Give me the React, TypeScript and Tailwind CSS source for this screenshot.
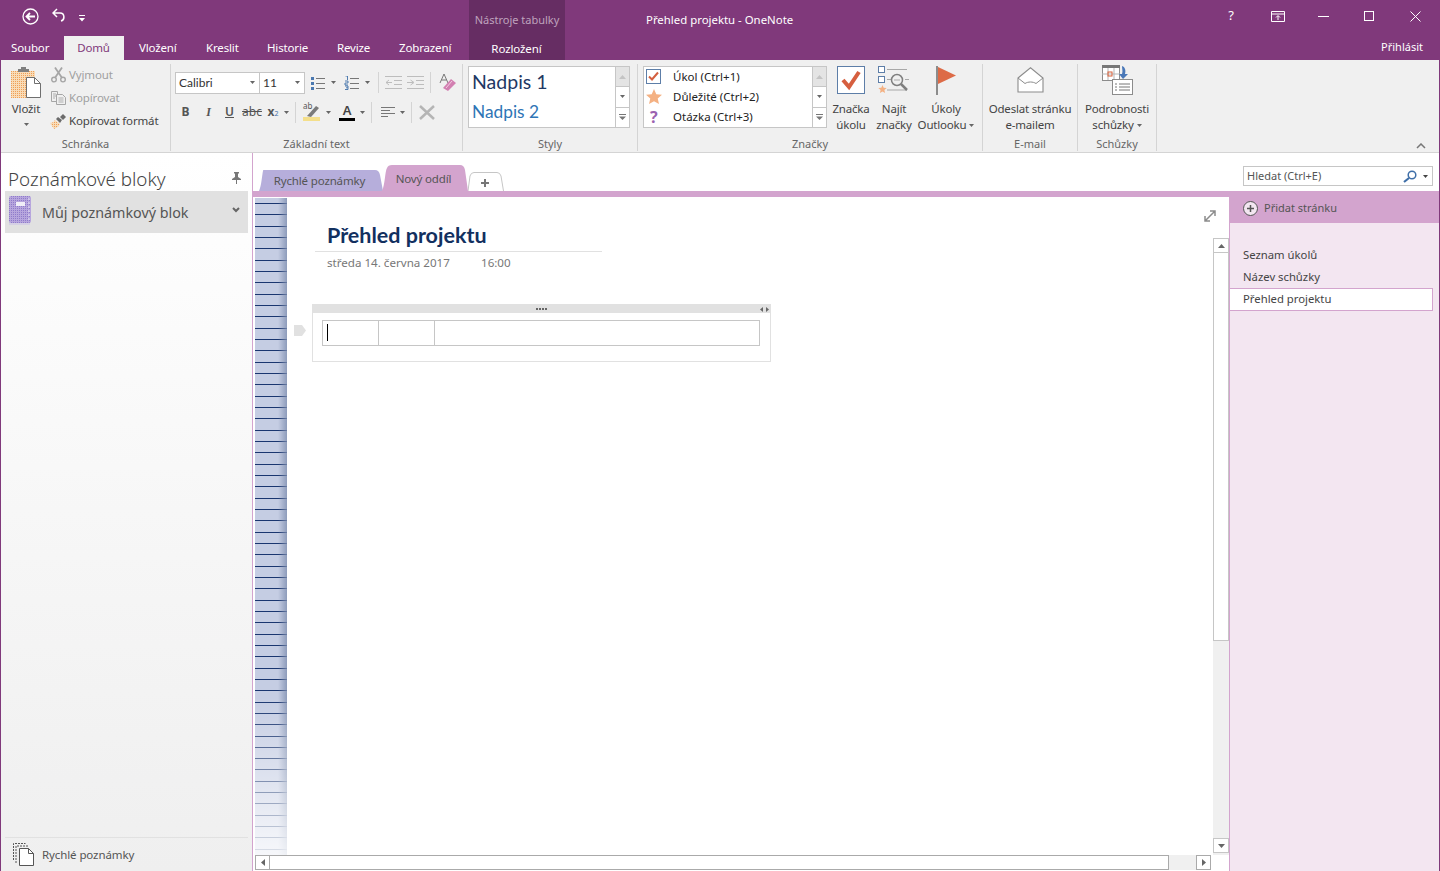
import type { ReactNode } from 'react';

const Caret = ({ color = '#666' }: { color?: string }) => (
  <svg width="5" height="3" viewBox="0 0 5 3" className="shrink-0">
    <path d="M0 0h5L2.5 3z" fill={color} />
  </svg>
);

const Dots = () => (
  <defs>
    <pattern id="dither" width="2" height="2" patternUnits="userSpaceOnUse">
      <rect width="2" height="2" fill="#f8dcb8" />
      <rect width="1" height="1" fill="#ef9f57" />
    </pattern>
  </defs>
);

const PasteIcon = () => (
  <svg width="31" height="32" viewBox="0 0 31 32">
    <Dots />
    <rect x="0" y="4" width="24" height="27" fill="url(#dither)" />
    <path d="M7 4V2h3V0h5v2h3v3H7z" fill="#7f7f7f" />
    <path d="M15.5 10.5h8l6 6v14h-14z" fill="#fff" stroke="#6f6f6f" />
    <path d="M23.5 10.5v6h6" fill="none" stroke="#6f6f6f" />
  </svg>
);

const ScissorsIcon = () => (
  <svg width="15" height="16" viewBox="0 0 15 16" fill="none" stroke="#a6a6a6" strokeWidth="1.4">
    <circle cx="3" cy="12.6" r="2.3" />
    <circle cx="12" cy="12.6" r="2.3" />
    <path d="M4.2 10.6 11 .6M10.8 10.6 4 .6" strokeWidth="1.8" />
  </svg>
);

const CopyIcon = () => (
  <svg width="15" height="14" viewBox="0 0 15 14" fill="#f0f0f0" stroke="#a6a6a6">
    <path d="M.5.5h6v10h-6z" />
    <path d="M5.5 3.5h6l3 3v7h-9z" />
    <path d="M2 3h3M2 5h3M2 7h2M7.5 7h5M7.5 9h5M7.5 11h5" strokeWidth=".9" />
  </svg>
);

const BrushIcon = () => (
  <svg width="17" height="15" viewBox="0 0 17 15">
    <Dots />
    <path d="M0 9c2 0 4-1 5-3l5 4c-1 2-3 4-6 5z" fill="url(#dither)" />
    <path d="m6 5 2-2 4 3-2 3z" fill="#6b6b6b" />
    <path d="m10 3 3-3 3 3-3 3z" fill="#6b6b6b" />
  </svg>
);

const BulletsIcon = () => (
  <svg width="15" height="14" viewBox="0 0 15 14">
    <path d="M1 1h3v3H1zM1 6h3v3H1zM1 11h3v3H1z" fill="#4a78b0" />
    <path d="M6 2.5h9M6 7.5h9M6 12.5h9" stroke="#777" />
  </svg>
);

const NumberingIcon = () => (
  <svg width="15" height="14" viewBox="0 0 15 14">
    <path d="M1.5 0h2v4M1 5h3v2H1v2h3M1 10h3v3.500H1M2 11.800h2" stroke="#3f6fa8" fill="none" strokeWidth=".9" />
    <path d="M6 2.500h9M6 7.500h9M6 12.500h9" stroke="#777" />
  </svg>
);

const IndentIcon = ({ flip = false }: { flip?: boolean }) => (
  <svg width="17" height="13" viewBox="0 0 17 13" stroke="#bdbdbd" fill="none">
    <path d="M0 .5h17M9 4.500h8M9 8.500h8M0 12.500h17" />
    {flip ? <path d="M7 6.500H1m3-2.500-3 2.500L4 9" /> : <path d="M0 6.500h6M3.500 4 7 6.500 3.500 9" />}
  </svg>
);

const EraserIcon = () => (
  <svg width="17" height="19" viewBox="0 0 17 19">
    <path d="M5 1 1 10M5 1l4 9M2.500 7h5" stroke="#777" fill="none" />
    <path d="m4 15 8-9 5 4-8 8z" fill="#d27fb1" />
    <path d="m7 15 6-7" stroke="#f3cbe1" />
  </svg>
);

const HighlightIcon = () => (
  <div className="relative h-[18px] w-[17px]">
    <span className="absolute -top-[2px] left-0 text-[8px] leading-[10px] text-[#555]">ab</span>
    <svg width="17" height="18" viewBox="0 0 17 18" className="absolute inset-0">
      <rect y="14" width="17" height="4" fill="#f4df8b" />
      <path d="M4 13 13 3l3 2-8 9z" fill="#7a7a7a" />
    </svg>
  </div>
);

const TaskBox = () => (
  <svg width="16" height="16" viewBox="0 0 16 16">
    <rect x=".5" y=".5" width="14" height="14" fill="#fff" stroke="#5d7ea8" />
    <path d="m3 7.500 3 3 6-7" stroke="#d45f3f" strokeWidth="2" fill="none" />
  </svg>
);

const StarIcon = ({ size = 16 }: { size?: number }) => (
  <svg width={size} height={size} viewBox="0 0 16 16">
    <path d="m8 0 2.300 5.200 5.700.6-4.300 3.700 1.300 5.500L8 12.200 3 15l1.300-5.500L0 5.800l5.700-.6z" fill="#f4b183" />
  </svg>
);

const TaskTagIcon = () => (
  <svg width="28" height="28" viewBox="0 0 28 28">
    <rect x=".5" y=".5" width="27" height="27" fill="#fff" stroke="#5d7ea8" />
    <path d="m6 14 6 7L22 6" stroke="#d65f3f" strokeWidth="4" fill="none" />
  </svg>
);

const FindTagsIcon = () => (
  <svg width="32" height="28" viewBox="0 0 32 28" fill="none">
    <rect x=".5" y=".5" width="6" height="6" fill="#fff" stroke="#5d7ea8" />
    <rect x=".5" y="10.500" width="6" height="6" fill="#fff" stroke="#5d7ea8" />
    <path d="M9 3.500h20M9 13.500h4M27 13.500h4M9 24h20" stroke="#a8a8a8" />
    <circle cx="19" cy="14" r="5.500" stroke="#7f7f7f" strokeWidth="1.500" />
    <path d="M16 14h6" stroke="#aaa" />
    <path d="m23 18 6 6" stroke="#7f7f7f" strokeWidth="2.500" />
    <path d="m4.500 19 1.200 2.800 3 .3-2.300 2 .7 3-2.600-1.500-2.600 1.500.7-3-2.300-2 3-.3z" fill="#f4b183" />
  </svg>
);

const FlagIcon = () => (
  <svg width="21" height="29" viewBox="0 0 21 29">
    <path d="M0 0h2v29H0z" fill="#8c8c8c" />
    <path d="M2 1 20 9.500 2 18z" fill="#dd6b47" />
  </svg>
);

const EnvelopeIcon = () => (
  <svg width="27" height="26" viewBox="0 0 27 26" fill="none" stroke="#8c8c8c">
    <path d="M1 11 13.500 .8 26 11v14H1z" fill="#fff" strokeWidth="1.100" />
    <path d="m1 11 7 5.500c3-2 8-2 11 0L26 11" />
  </svg>
);

const MeetingIcon = () => (
  <svg width="31" height="30" viewBox="0 0 31 30" fill="none">
    <rect x=".5" y=".5" width="17" height="15" fill="#fff" stroke="#8c8c8c" />
    <rect x="0" y="0" width="18" height="3" fill="#777" />
    <path d="M6 3v12M12 3v12M0 9h18" stroke="#b5b5b5" />
    <rect x="6" y="7" width="4" height="4" stroke="#d9603a" />
    <rect x="10.500" y="14.500" width="20" height="15" fill="#fff" stroke="#8c8c8c" />
    <path d="M13 19h2M17 19h11M13 22h2M17 22h11M13 25h2M17 25h11" stroke="#777" />
    <path d="M20 1c3 1 4 4 3 8h3l-5 5-4-5h3c1-3 0-5 0-8z" fill="#4a78b8" />
  </svg>
);

const TinyScrollBtn = ({ kind, grey = false }: { kind: 'up' | 'down' | 'more'; grey?: boolean }) => (
  <div className={`flex flex-1 items-center justify-center border-b border-[#c6c6c6] last:border-b-0 ${grey ? 'bg-[#e4e4e4]' : 'bg-white'}`}>
    {kind === 'up' && (
      <svg width="7" height="4" viewBox="0 0 7 4"><path d="M3.500 0 7 4H0z" fill="#c4c4c4" /></svg>
    )}
    {kind === 'down' && <Caret />}
    {kind === 'more' && (
      <svg width="7" height="6" viewBox="0 0 7 6"><path d="M0 0h7v1H0zM0 2.500h7L3.500 6z" fill="#777" /></svg>
    )}
  </div>
);

const Gallery = ({ width, children }: { width: string; children: ReactNode }) => (
  <div className={`flex h-[62px] border border-[#c6c6c6] bg-white ${width}`}>
    <div className="min-w-0 flex-1">{children}</div>
    <div className="flex w-[14px] flex-col border-l border-[#c6c6c6]">
      <TinyScrollBtn kind="up" grey />
      <TinyScrollBtn kind="down" />
      <TinyScrollBtn kind="more" />
    </div>
  </div>
);

const Group = ({ label, width, children }: { label: string; width: string; children: ReactNode }) => (
  <div className={`flex shrink-0 flex-col border-r border-[#d4d4d4] ${width}`}>
    <div className="flex h-[70px] min-h-0 flex-1">{children}</div>
    <div className="h-[14px] pb-[1px] text-center text-[11px] leading-[14px] text-[#666]">{label}</div>
  </div>
);

const BigButton = ({ width, icon, lines, caret = false }: { width: string; icon: ReactNode; lines: string[]; caret?: boolean }) => (
  <div className={`flex shrink-0 flex-col items-center ${width}`}>
    <div className="flex h-[32px] items-center justify-center">{icon}</div>
    <div className="mt-[5px] whitespace-nowrap text-center text-[11.500px] leading-[16px] tracking-[-0.2px] text-[#444]">
      <div>{lines[0]}</div>
      <div className="flex items-center justify-center gap-[3px]">
        {lines[1]}
        {caret && <Caret />}
      </div>
    </div>
  </div>
);

const Sep = () => <div className="mx-[6px] h-[21px] w-px shrink-0 bg-[#d4d4d4]" />;

const TextBtn = ({ className, children }: { className: string; children: ReactNode }) => (
  <span className={`flex h-[20px] shrink-0 items-center justify-center text-[12px] text-[#555] ${className}`}>{children}</span>
);

const Tab = ({ label, fill, width, height, top }: { label: string; fill: string; width: number; height: number; top: number }) => (
  <div className="relative flex shrink-0 justify-center pr-[3px]" style={{ width, height }}>
    <svg width={width} height={height} viewBox={`0 0 ${width} ${height}`} className="absolute inset-0">
      <path d={`M0 ${height}C3 ${height - 6} 3 ${height - 20} 5 ${height - 23}Q6 0 10 0H${width - 8}Q${width - 4} 0 ${width - 3} 5L${width} ${height}z`} fill={fill} />
    </svg>
    <span className="relative text-[11.500px] leading-[16px] tracking-[-0.15px] text-[#555]" style={{ paddingTop: top }}>{label}</span>
  </div>
);

export default function App() {
  return (
    <div className="flex h-[871px] w-[1440px] flex-col overflow-hidden border-x border-[#80397b] bg-white font-['Noto_Sans',sans-serif] text-[11.500px]">
      {/* Title bar and ribbon tabs */}
      <header className="flex h-[60px] shrink-0 bg-[#80397b] text-white">
        <div className="flex w-[468px] shrink-0 flex-col">
          <div className="flex h-[36px] items-center pl-[21px]">
            <svg width="17" height="17" viewBox="0 0 17 17" fill="none" stroke="#fff" className="mb-[4px]">
              <circle cx="8.500" cy="8.500" r="7.500" strokeWidth="1.300" />
              <path d="M13 8.500H5M8 5 4.500 8.500 8 12" strokeWidth="1.800" />
            </svg>
            <svg width="14" height="14" viewBox="0 0 14 14" fill="none" stroke="#fff" strokeWidth="1.500" className="ml-[13px] mb-[6px]">
              <path d="M5 1 1 5l4 4M1 5h7c5 0 5 7 1 8" />
            </svg>
            <svg width="6" height="7" viewBox="0 0 6 7" className="ml-[13px]">
              <path d="M0 0h6v1H0zM0 3h6L3 6.500z" fill="#fff" />
            </svg>
          </div>
          <nav className="flex h-[24px] items-end text-[11.500px] leading-[24px] tracking-[-0.15px]">
            <span className="ml-[10px] mt-[1px] w-[53px] leading-[25px]">Soubor</span>
            <span className="flex h-[24px] w-[60px] justify-center pr-[1px] bg-[#f0f0f0] text-[#80397b]">Domů</span>
            <span className="ml-[15px] w-[67px]">Vložení</span>
            <span className="w-[61px]">Kreslit</span>
            <span className="w-[70px]">Historie</span>
            <span className="w-[62px]">Revize</span>
            <span>Zobrazení</span>
          </nav>
        </div>
        <div className="flex w-[96px] shrink-0 flex-col items-center bg-[#662d63]">
          <span className="flex h-[36px] items-center pt-[4px] text-[11px] text-[#bfa3bd]">Nástroje tabulky</span>
          <span className="flex h-[24px] items-center pr-[1px] pt-[1px] text-[11.500px] tracking-[-0.1px]">Rozložení</span>
        </div>
        <div className="flex flex-1 flex-col">
          <div className="flex h-[36px] items-center">
            <span className="ml-[81px] pt-[3px] text-[11.400px]">Přehled projektu - OneNote</span>
            <div className="ml-auto flex items-center pb-[4px] pr-[18px]">
              <span className="text-[13px]">?</span>
              <svg width="14" height="11" viewBox="0 0 14 11" fill="none" stroke="#fff" className="ml-[37px]">
                <path d="M.5.500h13v10H.500zM.500 3h13M7 9V5M5 6.500l2-2 2 2" />
              </svg>
              <div className="ml-[33px] h-px w-[11px] bg-white" />
              <div className="ml-[35px] h-[10px] w-[10px] border border-white" />
              <svg width="11" height="11" viewBox="0 0 11 11" stroke="#fff" className="ml-[36px]">
                <path d="m.500.500 10 10m0-10-10 10" />
              </svg>
            </div>
          </div>
          <div className="h-[24px] pr-[16px] text-right text-[11px] leading-[22px]">Přihlásit</div>
        </div>
      </header>

      {/* Ribbon */}
      <section className="relative flex h-[93px] shrink-0 border-b border-[#d4d4d4] bg-[#f0f0f0] pb-[1px] pt-[4px]">
        <Group label="Schránka" width="w-[170px]">
          <div className="ml-[8px] flex w-[34px] flex-col items-center pt-[3px] tracking-[-0.15px] text-[#444]">
            <PasteIcon />
            <span className="mt-[2px] leading-[16px]">Vložit</span>
            <div className="mt-[6px]"><Caret /></div>
          </div>
          <div className="ml-[8px] flex flex-col gap-[7px] pt-[3px] tracking-[-0.15px] text-[#a0a0a0]">
            <div className="flex h-[16px] items-center gap-[2px]"><ScissorsIcon /><span className="ml-[1px]">Vyjmout</span></div>
            <div className="flex h-[16px] items-center gap-[3px]"><CopyIcon /><span>Kopírovat</span></div>
            <div className="-ml-[1px] flex h-[16px] items-center gap-[2px] text-[#444]"><BrushIcon /><span>Kopírovat formát</span></div>
          </div>
        </Group>

        <Group label="Základní text" width="w-[292px]">
          <div className="flex flex-col pl-[4px] pt-[7px]">
            <div className="flex h-[23px] items-center">
              <div className="flex h-[22px] w-[85px] items-center justify-between border border-[#c6c6c6] bg-white pl-[3px] pr-[4px] font-['Lato',sans-serif] text-[12px] text-[#333]">
                Calibri <Caret />
              </div>
              <div className="flex h-[22px] w-[45px] items-center justify-between border border-l-0 border-[#c6c6c6] bg-white pl-[3px] pr-[4px] font-['Lato',sans-serif] text-[12px] text-[#333]">
                11 <Caret />
              </div>
              <div className="ml-[5px] flex items-center gap-[6px]"><BulletsIcon /><Caret /></div>
              <div className="ml-[8px] mr-[2px] flex items-center gap-[6px]"><NumberingIcon /><Caret /></div>
              <Sep />
              <div className="flex items-center gap-[5px]"><IndentIcon flip /><IndentIcon /></div>
              <Sep />
              <div className="ml-[2px]"><EraserIcon /></div>
            </div>
            <div className="mt-[6px] flex h-[24px] items-center">
              <TextBtn className="ml-[4px] w-[13px] font-bold">B</TextBtn>
              <TextBtn className="ml-[10px] w-[13px] font-['Liberation_Serif',serif] font-bold italic">I</TextBtn>
              <TextBtn className="ml-[8px] w-[13px] font-semibold underline">U</TextBtn>
              <TextBtn className="ml-[7px] w-[18px] text-[10.500px] line-through">abc</TextBtn>
              <TextBtn className="ml-[5px] w-[14px] font-bold">
                x<sub className="text-[7px] font-normal text-[#3f6fa8]">2</sub>
              </TextBtn>
              <div className="ml-[4px]"><Caret /></div>
              <Sep />
              <div className="ml-[1px] flex items-center gap-[6px]"><HighlightIcon /><Caret /></div>
              <div className="ml-[8px] flex items-center gap-[5px]">
                <div className="flex h-[18px] w-[16px] flex-col items-center justify-end">
                  <span className="text-[13px] font-semibold leading-[13px] text-[#444]">A</span>
                  <div className="mt-[1px] h-[3px] w-[16px] bg-black" />
                </div>
                <Caret />
              </div>
              <Sep />
              <div className="ml-[3px] flex items-center gap-[5px]">
                <svg width="14" height="11" viewBox="0 0 14 11" stroke="#777"><path d="M0 .5h14M0 3.500h9M0 6.500h14M0 9.500h7" /></svg>
                <Caret />
              </div>
              <Sep />
              <svg width="16" height="15" viewBox="0 0 16 15" stroke="#b5b5b5" strokeWidth="2.500" className="ml-[1px]">
                <path d="m1 1 14 13M15 1 1 14" />
              </svg>
            </div>
          </div>
        </Group>

        <Group label="Styly" width="w-[175px]">
          <div className="pl-[5px] pt-[2px]">
            <Gallery width="w-[162px]">
              <div className="pl-[3px] pt-[1px] font-['Lato',sans-serif] text-[#1f3864]">
                <div className="text-[19.500px] leading-[28px]">Nadpis 1</div>
                <div className="mt-[4px] text-[17.300px] leading-[24px] text-[#2e75b6]">Nadpis 2</div>
              </div>
            </Gallery>
          </div>
        </Group>

        <Group label="Značky" width="w-[345px]">
          <div className="flex">
            <div className="pl-[5px] pt-[2px]">
              <Gallery width="w-[184px]">
                <div className="flex flex-col pl-[2px] text-[11.500px] text-[#222]">
                  {[
                    { icon: <TaskBox />, text: 'Úkol (Ctrl+1)' },
                    { icon: <StarIcon />, text: 'Důležité (Ctrl+2)' },
                    { icon: <span className="ml-[4px] text-[16px] font-bold leading-[20px] text-[#9b62b0]">?</span>, text: 'Otázka (Ctrl+3)' }
                  ].map((tag, index) => (
                    <div key={index} className="flex h-[20px] items-center">
                      <div className="flex w-[27px] shrink-0 items-center">{tag.icon}</div>
                      {tag.text}
                    </div>
                  ))}
                </div>
              </Gallery>
            </div>
            <BigButton width="ml-[1px] w-[46px]" icon={<TaskTagIcon />} lines={['Značka', 'úkolu']} />
            <BigButton width="w-[40px]" icon={<FindTagsIcon />} lines={['Najít', 'značky']} />
            <BigButton width="ml-[2px] w-[60px]" icon={<FlagIcon />} lines={['Úkoly', 'Outlooku']} caret />
          </div>
        </Group>

        <Group label="E-mail" width="w-[95px]">
          <BigButton width="w-full" icon={<EnvelopeIcon />} lines={['Odeslat stránku', 'e-mailem']} />
        </Group>

        <Group label="Schůzky" width="w-[79px]">
          <BigButton width="w-full" icon={<MeetingIcon />} lines={['Podrobnosti', 'schůzky']} caret />
        </Group>

        <svg width="10" height="6" viewBox="0 0 10 6" fill="none" stroke="#777" strokeWidth="1.500" className="absolute bottom-[3px] right-[13px]">
          <path d="m1 5 4-4 4 4" />
        </svg>
      </section>

      {/* Body */}
      <div className="flex min-h-0 flex-1">
        {/* Notebook pane */}
        <aside className="flex w-[252px] shrink-0 flex-col border-r border-[#d3a4ce] bg-gradient-to-b from-white to-[#efefef]">
          <div className="flex h-[38px] items-end justify-between pl-[7px] pr-[11px]">
            <span className="text-[18.800px] font-light leading-[24px] text-[#444]">Poznámkové bloky</span>
            <svg width="9" height="12" viewBox="0 0 9 12" className="mb-[7px]">
              <path d="M2 0h5v1L6 2v3l3 2v1H5v4H4V8H0V7l3-2V2L2 1z" fill="#777" />
            </svg>
          </div>
          <div className="mx-[4px] flex h-[42px] items-center bg-[#e1e1e1] pl-[4px] pr-[8px]">
            <svg width="23" height="29" viewBox="0 0 23 29" className="mb-[3px] shrink-0">
              <defs>
                <pattern id="nb" width="2" height="2" patternUnits="userSpaceOnUse">
                  <rect width="2" height="2" fill="#b7a6dd" />
                  <rect width="1" height="1" fill="#8f7ccb" />
                </pattern>
              </defs>
              <rect width="22" height="27" rx="2" fill="url(#nb)" />
              <rect x="7" y="6" width="9" height="4" fill="#f0eef8" />
              <path d="M20 2v24" stroke="#e9e5f5" strokeDasharray="2 2" />
              <path d="M0 28h21" stroke="#c9bfe8" />
            </svg>
            <span className="ml-[10px] flex-1 pt-[2px] text-[14.300px] text-[#555]">Můj poznámkový blok</span>
            <svg width="8" height="6" viewBox="0 0 8 6" fill="none" stroke="#666" strokeWidth="2" className="mb-[4px]">
              <path d="m1 1 3 3 3-3" />
            </svg>
          </div>
          <div className="mx-[4px] mt-auto flex h-[34px] items-center border-t border-[#e1e1e1] pl-[8px]">
            <svg width="21" height="23" viewBox="0 0 21 23" fill="#fff" stroke="#555">
              <path d="M.5 17V.5h12M3 20V3h12" strokeDasharray="2 1" fill="none" />
              <path d="M6.500 22.500v-17h9l5 5v12z" />
              <path d="M15.500 5.500v5h5" fill="none" />
            </svg>
            <span className="ml-[8px] text-[11.500px] tracking-[-0.1px] text-[#555]">Rychlé poznámky</span>
          </div>
        </aside>

        <div className="flex min-w-0 flex-1 flex-col">
          {/* Section tabs + search */}
          <div className="flex h-[38px] shrink-0 items-end pl-[6px]">
            <Tab label="Rychlé poznámky" fill="#b6aedb" width={124} height={21} top={3} />
            <div className="-ml-[1px]"><Tab label="Nový oddíl" fill="#d3a4ce" width={86} height={26} top={6} /></div>
            <div className="relative h-[19px] w-[36px]">
              <svg width="36" height="19" viewBox="0 0 36 19" fill="#fff" stroke="#c6c6c6" className="absolute inset-0">
                <path d="M0 19 2 4Q3 .5 6 .5H29Q32 .5 33 4L35.500 19" />
                <path d="M13 11h8M17 7v8" stroke="#777" strokeWidth="2" />
              </svg>
            </div>
            <div className="mb-[5px] ml-auto mr-[6px] flex h-[20px] w-[190px] items-center justify-between border border-[#c6c6c6] bg-white pl-[3px] pr-[4px] text-[11px] text-[#555]">
              Hledat (Ctrl+E)
              <span className="flex items-center gap-[6px]">
                <svg width="14" height="13" viewBox="0 0 14 13" fill="none" stroke="#3f6fa8">
                  <circle cx="9" cy="5" r="3.800" strokeWidth="1.500" />
                  <path d="M6 8 1 12" strokeWidth="2.200" />
                </svg>
                <Caret color="#444" />
              </span>
            </div>
          </div>

          <div className="flex min-h-0 flex-1">
            {/* Page canvas */}
            <div className="flex min-w-0 flex-1 flex-col">
              <div className="h-[6px] shrink-0 bg-[#d3a4ce]" />
              <div className="flex min-h-0 flex-1">
                <div className="relative ml-[2px] mt-[1px] w-[32px] shrink-0 bg-[repeating-linear-gradient(to_bottom,#c5cde3_0,#c5cde3_5px,#1a3670_5px,#1a3670_6px,#c5cde3_6px,#c5cde3_11.330px)]">
                  <div className="absolute inset-y-0 right-0 w-[9px] bg-gradient-to-r from-transparent to-[#7f8fb0]/80" />
                  <div className="absolute inset-0 bg-gradient-to-b from-white/0 from-[76%] to-white/85" />
                </div>

                <div className="relative flex min-w-0 flex-1 flex-col">
                  <div className="flex min-h-0 flex-1">
                    <div className="min-w-0 flex-1">
                      <div className="ml-[28px] mt-[23px] w-[287px] border-b border-[#e1e1e1] pb-[1px] pl-[12px] font-['Lato',sans-serif] text-[21.500px] font-bold leading-[30px] text-[#12305f]">
                        Přehled projektu
                      </div>
                      <div className="ml-[40px] mt-[2px] flex text-[11.600px] leading-[18px] text-[#777]">
                        <span className="w-[154px]">středa 14. června 2017</span>
                        <span>16:00</span>
                      </div>
                      <div className="ml-[7px] mt-[32px] flex items-start">
                        <svg width="12" height="11" viewBox="0 0 12 11" className="mt-[21px] shrink-0">
                          <path d="M0 0h8l4 5.500L8 11H0z" fill="#e1e1e1" />
                        </svg>
                        <div className="ml-[6px] h-[58px] w-[459px] border border-[#e1e1e1]">
                          <div className="flex h-[8px] items-center bg-[#e1e1e1]">
                            <div className="ml-[223px] flex gap-[1px]">
                              {[0, 1, 2, 3].map((i) => (
                                <div key={i} className="h-[2px] w-[2px] bg-[#666]" />
                              ))}
                            </div>
                            <div className="ml-auto mr-[1px] flex gap-[3px]">
                              <svg width="3" height="5" viewBox="0 0 3 5"><path d="M3 0v5L0 2.500z" fill="#666" /></svg>
                              <svg width="3" height="5" viewBox="0 0 3 5"><path d="M0 0v5l3-2.500z" fill="#666" /></svg>
                            </div>
                          </div>
                          <div className="ml-[9px] mt-[7px] flex h-[26px] w-[438px] border border-[#c6c6c6]">
                            <div className="w-[56px] border-r border-[#c6c6c6] pl-[4px] pt-[3px]">
                              <div className="h-[17px] w-px bg-black" />
                            </div>
                            <div className="w-[56px] border-r border-[#c6c6c6]" />
                            <div className="flex-1" />
                          </div>
                        </div>
                      </div>
                    </div>
                    <div className="flex w-[16px] shrink-0 flex-col pt-[41px]">
                      <div className="flex h-full flex-col bg-[#f0f0f0] pb-[2px]">
                        <div className="flex h-[15px] items-center justify-center border border-[#c6c6c6] bg-white">
                          <svg width="7" height="4" viewBox="0 0 7 4"><path d="M3.500 0 7 4H0z" fill="#666" /></svg>
                        </div>
                        <div className="h-[388px] border-x border-b border-[#c6c6c6] bg-white" />
                        <div className="mt-auto flex h-[15px] items-center justify-center border border-[#c6c6c6] bg-white">
                          <svg width="7" height="4" viewBox="0 0 7 4"><path d="M0 0h7L3.500 4z" fill="#666" /></svg>
                        </div>
                      </div>
                    </div>
                  </div>
                  <svg width="12" height="12" viewBox="0 0 12 12" fill="none" stroke="#8c8c8c" strokeWidth="1.500" className="absolute right-[13px] top-[13px]">
                    <path d="M1 11 11 1M1 6v5h5M6 1h5v5" />
                  </svg>
                </div>
              </div>
              {/* Horizontal scrollbar */}
              <div className="ml-[2px] mr-[18px] flex h-[16px] shrink-0 items-start">
                <div className="flex h-[15px] w-[15px] items-center justify-center border border-[#aaa] bg-white">
                  <svg width="4" height="7" viewBox="0 0 4 7"><path d="M4 0v7L0 3.500z" fill="#666" /></svg>
                </div>
                <div className="h-[15px] w-[899px] border-y border-r border-[#aaa] bg-white" />
                <div className="h-[15px] flex-1 bg-[#f0f0f0]" />
                <div className="flex h-[15px] w-[15px] items-center justify-center border border-[#aaa] bg-white">
                  <svg width="4" height="7" viewBox="0 0 4 7"><path d="M0 0v7l4-3.500z" fill="#666" /></svg>
                </div>
              </div>
            </div>

            {/* Page list */}
            <aside className="flex w-[210px] shrink-0 flex-col border-l border-[#d3a4ce] bg-[#f3e6f1]">
              <div className="flex h-[32px] shrink-0 items-center gap-[6px] bg-[#d3a4ce] pl-[13px] pt-[2px] text-[11px] text-[#555]">
                <svg width="15" height="15" viewBox="0 0 15 15" fill="#f3e6f1" stroke="#555">
                  <circle cx="7.500" cy="7.500" r="7" />
                  <path d="M4 7.500h7M7.500 4v7" strokeWidth="1.500" />
                </svg>
                Přidat stránku
              </div>
              <div className="mt-[21px] pl-[13px] text-[11.300px] leading-[22px] text-[#444]">Seznam úkolů</div>
              <div className="pl-[13px] text-[11.300px] leading-[22px] text-[#444]">Název schůzky</div>
              <div className="mr-[6px] h-[23px] border-y border-r border-[#d3a4ce] bg-white pl-[13px] text-[11.300px] leading-[20px] text-[#444]">
                Přehled projektu
              </div>
            </aside>
          </div>
        </div>
      </div>
    </div>
  );
}
